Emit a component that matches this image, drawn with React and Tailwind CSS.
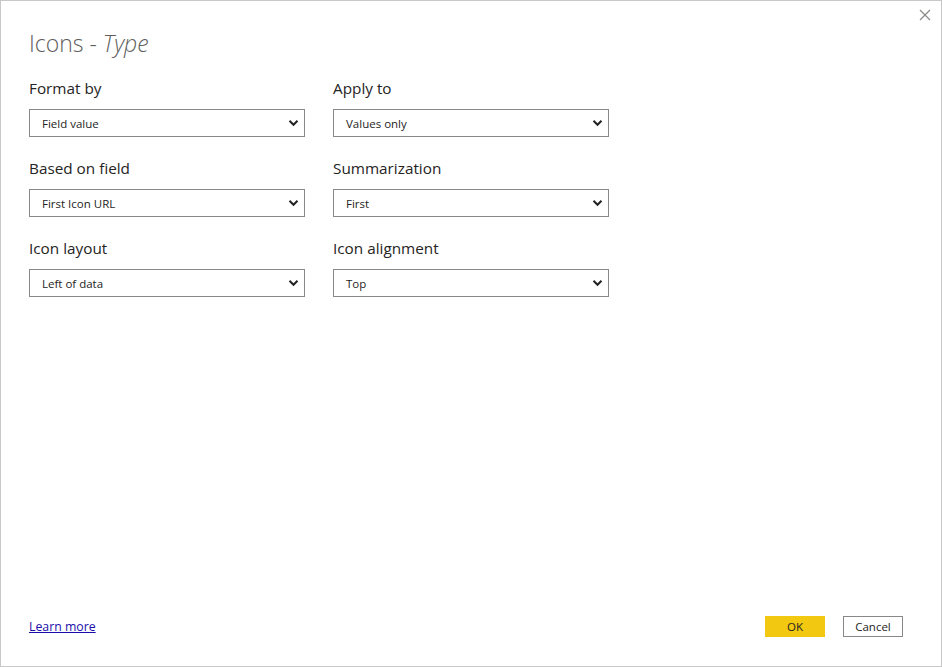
import React from "react";

const font = { fontFamily: '"Segoe UI", "Open Sans", "Liberation Sans", sans-serif' };

function Chevron() {
  return (
    <svg width="11" height="8" viewBox="0 0 11 8" className="shrink-0">
      <path d="M1.5 1.8 L5.5 5.8 L9.5 1.8" fill="none" stroke="#222" strokeWidth="2" />
    </svg>
  );
}

function Field({ label, value }) {
  return (
    <div className="flex flex-col">
      <div className="text-[15.3px] leading-[20px] text-[#252423]">{label}</div>
      <div className="mt-[11px] h-[28px] w-[276px] border border-[#8a8886] flex items-center justify-between pl-[12px] pr-[5px]">
        <span className="text-[11.5px] pt-[2px] text-[#252423]">{value}</span>
        <Chevron />
      </div>
    </div>
  );
}

export default function App() {
  return (
    <div style={font} className="relative w-[942px] h-[667px] bg-white border border-[#c8c8c8] flex flex-col">
      {/* close */}
      <button className="absolute top-[8px] right-[10px] w-[12px] h-[12px] flex items-center justify-center">
        <svg width="12" height="12" viewBox="0 0 12 12">
          <path d="M1 1 L11 11 M11 1 L1 11" stroke="#8a8886" strokeWidth="1.2" />
        </svg>
      </button>

      <div className="pl-[28px] pt-[27px]">
        <h1 className="text-[23px] leading-[30px] font-light text-[#605e5c]">
          Icons - <span className="italic">Type</span>
        </h1>

        <div className="mt-[20px] grid grid-cols-[276px_276px] gap-x-[28px] gap-y-[21px]">
          <Field label="Format by" value="Field value" />
          <Field label="Apply to" value="Values only" />
          <Field label="Based on field" value="First Icon URL" />
          <Field label="Summarization" value="First" />
          <Field label="Icon layout" value="Left of data" />
          <Field label="Icon alignment" value="Top" />
        </div>
      </div>

      <div className="mt-auto flex items-center justify-between pl-[28px] pr-[38px] pb-[29px]">
        <a href="#" className="text-[12.3px] pt-[2px] text-[#1a0dab] underline">Learn more</a>
        <div className="flex gap-[18px]">
          <button className="w-[60px] h-[21px] bg-[#f2c811] text-[11.5px] pt-[1px] text-[#252423]">OK</button>
          <button className="w-[60px] h-[21px] border border-[#8a8886] text-[11.5px] pt-[1px] text-[#252423]">Cancel</button>
        </div>
      </div>
    </div>
  );
}
